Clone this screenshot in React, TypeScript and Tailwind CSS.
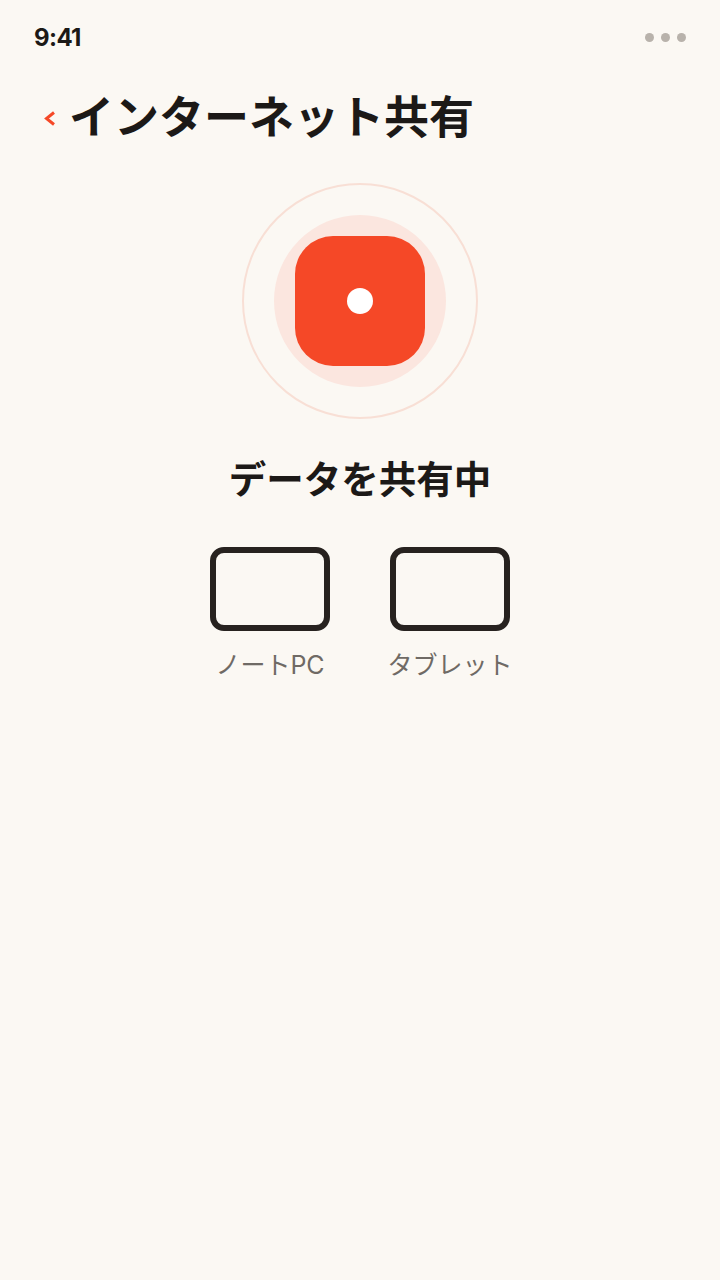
import React from "react";

const cjk = "font-['Inter','Noto_Sans_CJK_JP',sans-serif]";

const Device = ({ label }: { label: string }) => (
  <div className="flex w-[120px] flex-col items-center">
    <div className="h-[84px] w-[120px] rounded-[14px] border-[6px] border-[#27221f]" />
    <p className="mt-[18px] text-[25px] leading-[32px] whitespace-nowrap text-[#6f6a65]">{label}</p>
  </div>
);

export default function App() {
  return (
    <div className={`flex h-[1280px] w-[720px] flex-col bg-[#fbf8f3] ${cjk}`}>
      {/* Status bar */}
      <div className="flex h-[74px] items-center justify-between pr-[34px] pl-[34px]">
        <span className="pt-[1px] text-[24px] leading-none font-bold tracking-[-0.6px] text-[#1c1917]">9:41</span>
        <div className="flex gap-[7px]">
          <span className="size-[9px] rounded-full bg-[#b8b2ab]" />
          <span className="size-[9px] rounded-full bg-[#b8b2ab]" />
          <span className="size-[9px] rounded-full bg-[#b8b2ab]" />
        </div>
      </div>

      {/* Title */}
      <div className="flex h-[86px] items-center pl-[44px]">
        <svg className="mt-[2px]" width="11" height="15" viewBox="0 0 11 15" fill="none">
          <path d="M10 1.5 L2.5 7.5 L10 13.5" stroke="#f54827" strokeWidth="3" />
        </svg>
        <h1 className="ml-[14px] text-[45px] leading-none font-bold text-[#1c1917]">インターネット共有</h1>
      </div>

      {/* Sharing indicator */}
      <div className="mt-[23px] flex justify-center">
        <div className="flex size-[236px] items-center justify-center rounded-full border-2 border-[#f8dfd5]">
          <div className="flex size-[172px] items-center justify-center rounded-full bg-[#fbe6df]">
            <div className="flex size-[130px] items-center justify-center rounded-[38px] bg-[#f54827]">
              <div className="size-[26px] rounded-full bg-white" />
            </div>
          </div>
        </div>
      </div>

      <h2 className="mt-[36px] text-center text-[37.5px] leading-[50px] font-bold text-[#1c1917]">データを共有中</h2>

      {/* Devices */}
      <div className="mt-[42px] flex justify-center gap-[60px]">
        <Device label="ノートPC" />
        <Device label="タブレット" />
      </div>
    </div>
  );
}
